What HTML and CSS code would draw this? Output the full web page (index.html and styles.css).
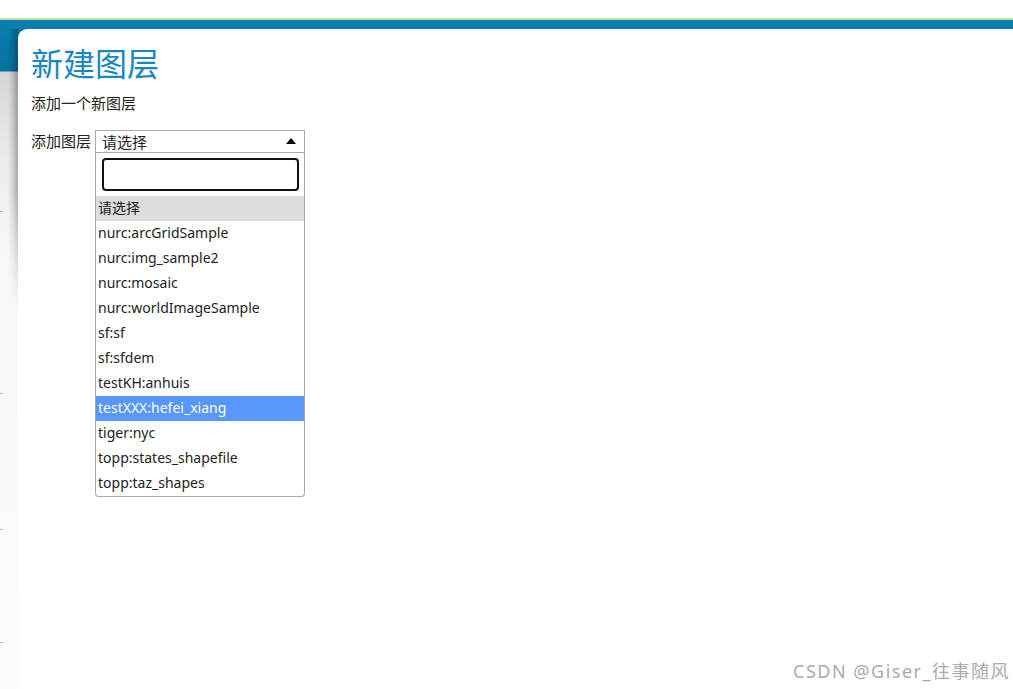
FILE: index.html
```html
<!DOCTYPE html>
<html lang="zh-CN">
<head>
<meta charset="utf-8">
<title>新建图层</title>
<link rel="stylesheet" href="styles.css">
</head>
<body>
<div class="page">
  <div class="gutter"></div>
  <main class="panel">
    <h1 class="title">新建图层</h1>
    <p class="desc">添加一个新图层</p>
    <div class="field">
      <label class="label">添加图层</label>
      <div class="select">
        <div class="select-box">
          <span class="select-value">请选择</span>
          <span class="select-arrow"></span>
        </div>
        <div class="dropdown">
          <div class="search"><input class="search-field" type="text"></div>
          <ul class="options">
            <li class="option selected">请选择</li>
            <li class="option">nurc:arcGridSample</li>
            <li class="option">nurc:img_sample2</li>
            <li class="option">nurc:mosaic</li>
            <li class="option">nurc:worldImageSample</li>
            <li class="option">sf:sf</li>
            <li class="option">sf:sfdem</li>
            <li class="option">testKH:anhuis</li>
            <li class="option highlighted">testXXX:hefei_xiang</li>
            <li class="option">tiger:nyc</li>
            <li class="option">topp:states_shapefile</li>
            <li class="option">topp:taz_shapes</li>
          </ul>
        </div>
      </div>
    </div>
  </main>
  <div class="watermark">CSDN @Giser_往事随风</div>
</div>
</body>
</html>
```
FILE: styles.css
```css
* { box-sizing: border-box; }
html, body { margin: 0; padding: 0; }
body {
  font-family: "Noto Sans", "Noto Sans CJK SC", sans-serif;
  color: #222;
}
.page {
  position: relative;
  display: flex;
  min-height: 689px;
  padding-top: 29px;
  background:
    linear-gradient(#b9b9a8, #b9b9a8) 0 211px / 3px 1px no-repeat,
    linear-gradient(#b9b9a8, #b9b9a8) 0 393px / 3px 1px no-repeat,
    linear-gradient(#b9b9a8, #b9b9a8) 0 529px / 3px 1px no-repeat,
    linear-gradient(#b9b9a8, #b9b9a8) 0 642px / 3px 1px no-repeat,
    linear-gradient(to bottom,
      #ffffff 0, #ffffff 18px,
      #c9dd9e 18px, #c9dd9e 20px,
      #0a7fb0 20px, #05729f 71px,
      #d6d6d6 72px, #ececec 160px, #f8f8f8 260px, #fbfbfb 100%);
}
.gutter {
  width: 18px;
  flex: none;
  background: linear-gradient(to right, rgba(0,0,0,0) 8px, rgba(0,0,0,0.12) 13px, rgba(0,0,0,0.3) 18px);
  -webkit-mask-image: linear-gradient(to bottom, #000 0, #000 160px, transparent 280px);
  mask-image: linear-gradient(to bottom, #000 0, #000 160px, transparent 280px);
}
.panel {
  flex: 1;
  background: #fff;
  border-top-left-radius: 9px;
  padding: 12px 0 0 13px;
}
.title {
  margin: 0;
  font-family: "Noto Sans CJK SC", sans-serif;
  font-weight: 400;
  font-size: 32px;
  line-height: 42px;
  color: #1a86c2;
}
.desc {
  margin: 10px 0 0;
  font-family: "Noto Sans CJK SC", sans-serif;
  font-size: 15px;
  line-height: 20px;
}
.field {
  display: flex;
  align-items: flex-start;
  margin-top: 17px;
}
.label {
  font-family: "Noto Sans CJK SC", sans-serif;
  font-size: 15px;
  line-height: 20px;
  padding-top: 1px;
  width: 64px;
}
.select {
  width: 210px;
}
.select-box {
  display: flex;
  align-items: center;
  justify-content: space-between;
  height: 23px;
  border: 1px solid #aaa;
  padding: 0 8px 0 6px;
}
.select-value {
  font-family: "Noto Sans CJK SC", sans-serif;
  font-size: 15px;
  line-height: 20px;
  padding-top: 1px;
}
.select-arrow {
  width: 0;
  height: 0;
  border-style: solid;
  border-width: 0 5px 6px 5px;
  border-color: transparent transparent #000 transparent;
  margin-top: -1px;
}
.dropdown {
  border: 1px solid #aaa;
  border-top: none;
  border-radius: 0 0 4px 4px;
}
.search {
  padding: 5px 5px 5px 6px;
}
.search-field {
  display: block;
  width: 100%;
  height: 33px;
  border: 2px solid #111;
  border-radius: 4px;
  outline: none;
  background: #fff;
  font-size: 14px;
}
.options {
  list-style: none;
  margin: 0;
  padding: 0;
}
.option {
  height: 25px;
  line-height: 24px;
  padding-left: 2px;
  font-size: 14px;
  color: #222;
  white-space: nowrap;
}
.option.selected { background: #ddd; }
.option.highlighted { background: #5897fb; color: #fff; }
.watermark {
  position: absolute;
  right: 3px;
  bottom: 6px;
  font-family: "Noto Sans", "Noto Sans CJK SC", sans-serif;
  font-size: 18px;
  letter-spacing: 1.5px;
  color: #aaaaaa;
}
```
